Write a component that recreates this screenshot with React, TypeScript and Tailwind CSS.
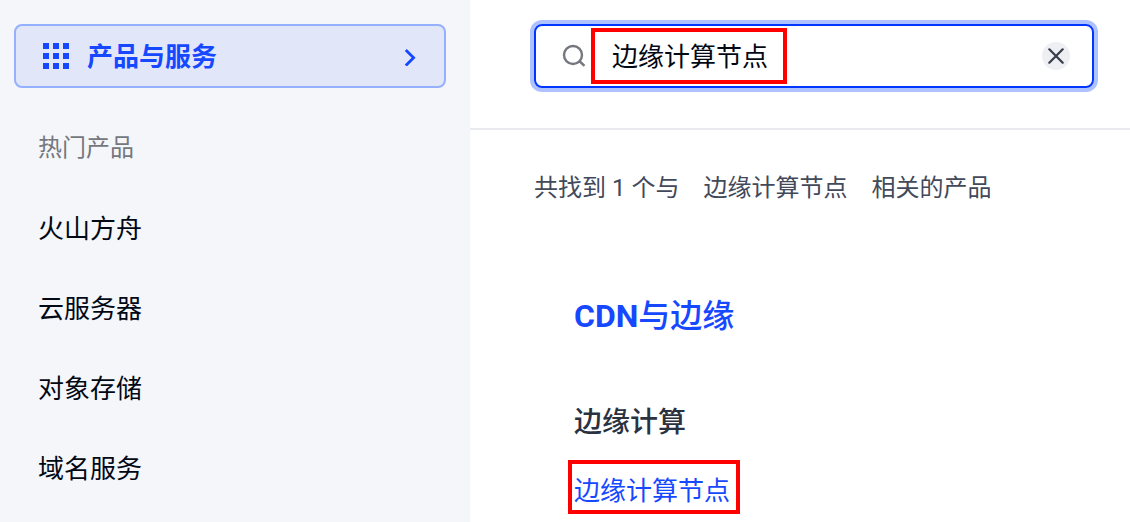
import { useState } from "react";

/* ============================================================
   PRODUCT SEARCH PANEL
   Left: category entry and popular products.
   Right: search field with the matching products.
   ============================================================ */

const POPULAR_PRODUCTS = ["火山方舟", "云服务器", "对象存储", "域名服务"];
const GRID_OFFSETS = [1, 11, 21];

function GridIcon() {
  return (
    <svg width="28" height="28" viewBox="0 0 28 28" fill="currentColor" aria-hidden="true">
      {GRID_OFFSETS.map((y) =>
        GRID_OFFSETS.map((x) => (
          <rect key={`${x}-${y}`} x={x} y={y} width="6" height="6" />
        ))
      )}
    </svg>
  );
}

function ChevronIcon() {
  return (
    <svg width="12" height="20" viewBox="0 0 12 20" fill="none" aria-hidden="true">
      <path d="M1.8 4l7.8 7.8-7.8 7.8" stroke="currentColor" strokeWidth="2.8" />
    </svg>
  );
}

function SearchIcon() {
  return (
    <svg
      width="24"
      height="24"
      viewBox="0 0 24 24"
      fill="none"
      stroke="currentColor"
      strokeWidth="2.4"
      className="shrink-0"
      aria-hidden="true"
    >
      <circle cx="11" cy="11" r="9" />
      <path d="M17.3 17l5.2 4.8" />
    </svg>
  );
}

function CloseIcon() {
  return (
    <svg width="16" height="16" viewBox="0 0 16 16" fill="none" aria-hidden="true">
      <path
        d="M1.3 1.3l13.4 13.4M14.7 1.3L1.3 14.7"
        stroke="currentColor"
        strokeWidth="2.2"
        strokeLinecap="round"
      />
    </svg>
  );
}

function Sidebar() {
  return (
    <aside className="w-[470px] shrink-0 bg-[#f4f6fa] pt-6 pr-6 pl-[14px]">
      <button
        type="button"
        className="flex h-16 w-full cursor-pointer items-center rounded-lg border-2 border-[#94b0ff] bg-[#e1e7f9] pr-7 pl-[26px] text-[26px] font-bold text-[#1648ff]"
      >
        <GridIcon />
        <span className="mr-auto ml-[17px] pt-[2px]">产品与服务</span>
        <ChevronIcon />
      </button>

      <nav aria-labelledby="popular-title" className="mt-5 pl-6">
        <h2 id="popular-title" className="text-2xl leading-[80px] text-[#75777f]">
          热门产品
        </h2>
        <ul className="pt-px">
          {POPULAR_PRODUCTS.map((name) => (
            <li key={name}>
              <a href="#" className="text-[26px] leading-[80px] text-[#020814]">
                {name}
              </a>
            </li>
          ))}
        </ul>
      </nav>
    </aside>
  );
}

export default function App() {
  const [query, setQuery] = useState("边缘计算节点");

  return (
    <div className="flex min-h-screen bg-white font-[Roboto,'Noto_Sans_CJK_SC',sans-serif]">
      <Sidebar />

      <main className="min-w-0 flex-1">
        <div className="border-b-2 border-[#e8eaef] pt-6 pr-9 pb-10 pl-16">
          <div className="relative flex h-16 items-center rounded-lg border-2 border-[#0036ff] pr-[22px] pl-[26px] text-[#75777f] ring-4 ring-[#adc2ff]">
            <SearchIcon />
            <input
              type="text"
              aria-label="搜索产品"
              value={query}
              onChange={(e) => setQuery(e.target.value)}
              className="ml-[26px] min-w-0 flex-1 pt-[2px] text-[26px] text-[#020814] outline-none"
            />
            <button
              type="button"
              aria-label="清空"
              onClick={() => setQuery("")}
              className="flex size-7 cursor-pointer items-center justify-center rounded-full bg-[#edeff3] text-[#353c48]"
            >
              <CloseIcon />
            </button>
            {/* Callout around the search term */}
            <span className="pointer-events-none absolute inset-y-[2px] left-[55px] w-[196px] border-4 border-[#ff0000]" />
          </div>
        </div>

        <p className="flex gap-6 pt-[42px] pl-16 text-2xl leading-8 text-[#42495a]">
          <span>共找到 1 个与</span>
          <span>边缘计算节点</span>
          <span>相关的产品</span>
        </p>

        <section className="mt-22 pl-26">
          <h2 className="text-[32px] leading-12 font-medium text-[#1648ff]">
            <span className="font-bold">CDN</span>与边缘
          </h2>
          <h3 className="mt-[67px] text-[28px] leading-8 font-medium text-[#2b323f]">边缘计算</h3>
          <a
            href="#"
            className="relative mt-[29px] inline-block pt-px text-[26px] leading-[44px] text-[#1648ff]"
          >
            边缘计算节点
            {/* Callout around the matched product */}
            <span className="pointer-events-none absolute -top-2 -right-[10px] -bottom-px -left-[6px] border-4 border-[#ff0000]" />
          </a>
        </section>
      </main>
    </div>
  );
}
